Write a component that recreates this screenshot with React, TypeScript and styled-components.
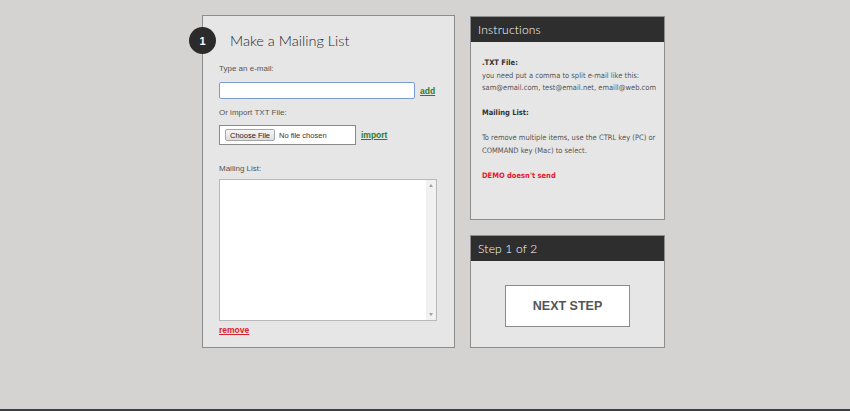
import React from "react";
import styled, { createGlobalStyle } from "styled-components";

const GlobalStyle = createGlobalStyle`
  html, body {
    margin: 0;
    padding: 0;
    background: #d4d3d1;
  }
  * {
    box-sizing: border-box;
  }
`;

const Page = styled.div`
  height: 100vh;
  display: flex;
  flex-direction: column;
  font-family: "Liberation Sans", Arial, sans-serif;
`;

const Main = styled.main`
  flex: 1;
  display: flex;
  align-items: flex-start;
  gap: 15px;
  padding: 15px 0 0 202px;
`;

const Footer = styled.footer`
  height: 2px;
  background: #3b3d40;
`;

const Panel = styled.section<{ $width: number; $height: number }>`
  position: relative;
  width: ${({ $width }) => $width}px;
  height: ${({ $height }) => $height}px;
  background: #e6e6e6;
  border: 1px solid #8c8c8c;
`;

const FormPanel = styled(Panel)`
  padding: 0 0 0 16px;
`;

const Badge = styled.div`
  position: absolute;
  left: -14px;
  top: 11px;
  width: 27px;
  height: 27px;
  border-radius: 50%;
  background: #2b2b2b;
  color: #fff;
  font: bold 11px "Liberation Sans", Arial, sans-serif;
  display: flex;
  align-items: center;
  justify-content: center;
`;

const Title = styled.h1`
  margin: 16px 0 0 11px;
  font: 300 14.5px Lato, "DejaVu Sans", sans-serif;
  color: #262626;
`;

const Label = styled.div<{ $top: number }>`
  margin-top: ${({ $top }) => $top}px;
  font-size: 8px;
  color: #555;
  line-height: 10px;
`;

const Row = styled.div<{ $top: number }>`
  margin-top: ${({ $top }) => $top}px;
  display: flex;
  align-items: center;
  gap: 5px;
`;

const EmailInput = styled.input`
  width: 196px;
  height: 17px;
  border: 1px solid #7b9bd4;
  border-radius: 2px;
  background: #fff;
  outline: none;
`;

const ActionLink = styled.a<{ $color: string }>`
  font-size: 8.5px;
  font-weight: bold;
  color: ${({ $color }) => $color};
  text-decoration: underline;
  cursor: pointer;
`;

const FileBox = styled.div`
  width: 137px;
  height: 20px;
  background: #fff;
  border: 1px solid #8a8a8a;
  display: flex;
  align-items: center;
  gap: 4px;
  padding-left: 5px;
  font-size: 7.5px;
  color: #333;
`;

const ChooseButton = styled.span`
  height: 12px;
  padding: 0 4px;
  border: 1px solid #a5a5a5;
  border-radius: 2px;
  background: linear-gradient(#f6f6f6, #dedede);
  display: flex;
  align-items: center;
  color: #222;
`;

const ListBox = styled.div`
  margin-top: 5px;
  width: 218px;
  height: 142px;
  border: 1px solid #b9b9b9;
  background: #fff;
  display: flex;
  justify-content: flex-end;
`;

const Scrollbar = styled.div`
  width: 10px;
  background: #f1f1f1;
  display: flex;
  flex-direction: column;
  justify-content: space-between;
  align-items: center;
  padding: 4px 0;
`;

const Arrow = styled.span<{ $down?: boolean }>`
  width: 0;
  height: 0;
  border-left: 2px solid transparent;
  border-right: 2px solid transparent;
  ${({ $down }) =>
    $down ? "border-top: 3px solid #a3a3a3;" : "border-bottom: 3px solid #a3a3a3;"}
`;

const RemoveRow = styled.div`
  margin-top: 1px;
  line-height: 12px;
`;

const Column = styled.div`
  display: flex;
  flex-direction: column;
  gap: 15px;
  padding-top: 1px;
`;

const PanelHeader = styled.header`
  height: 25px;
  background: #2e2e2e;
  color: #fff;
  padding-left: 7px;
  display: flex;
  align-items: center;
  font: 300 12px Lato, "DejaVu Sans", sans-serif;
  letter-spacing: 0.2px;
`;

const InstructionBody = styled.div`
  padding: 15px 0 0 11px;
  font-family: "DejaVu Sans Condensed", "Liberation Sans Narrow", "Liberation Sans", sans-serif;
  font-stretch: condensed;
  font-size: 7.5px;
  line-height: 12.5px;
  color: #555;
  white-space: nowrap;
`;

const Para = styled.p<{ $tone?: "head" | "alert" }>`
  margin: 0 0 12.5px;
  font-weight: ${({ $tone }) => ($tone ? "bold" : "normal")};
  color: ${({ $tone }) =>
    $tone === "alert" ? "#e8152a" : $tone === "head" ? "#333" : "#555"};
`;

const Strong = styled.strong`
  display: block;
  color: #333;
`;

const StepBody = styled.div`
  display: flex;
  justify-content: center;
  padding: 24px 0 0 0;
`;

const NextButton = styled.button`
  width: 125px;
  height: 42px;
  background: #fff;
  border: 1px solid #8c8c8c;
  color: #555;
  font: bold 12.5px "Liberation Sans", Arial, sans-serif;
  cursor: pointer;
`;

export default function App() {
  return (
    <>
      <GlobalStyle />
      <Page>
        <Main>
          <FormPanel $width={253} $height={333}>
            <Badge>1</Badge>
            <Title>Make a Mailing List</Title>
            <Label $top={15}>Type an e-mail:</Label>
            <Row $top={8}>
              <EmailInput />
              <ActionLink $color="#2a7d2a">add</ActionLink>
            </Row>
            <Label $top={9}>Or import TXT File:</Label>
            <Row $top={7}>
              <FileBox>
                <ChooseButton>Choose File</ChooseButton>
                No file chosen
              </FileBox>
              <ActionLink $color="#2a7d2a">import</ActionLink>
            </Row>
            <Label $top={19}>Mailing List:</Label>
            <ListBox>
              <Scrollbar>
                <Arrow />
                <Arrow $down />
              </Scrollbar>
            </ListBox>
            <RemoveRow>
              <ActionLink $color="#d9232d">remove</ActionLink>
            </RemoveRow>
          </FormPanel>
          <Column>
            <Panel $width={195} $height={204}>
              <PanelHeader>Instructions</PanelHeader>
              <InstructionBody>
                <Para>
                  <Strong>.TXT File:</Strong>
                  you need put a comma to split e-mail like this:
                  <br />
                  sam@email.com, test@email.net, emaill@web.com
                </Para>
                <Para $tone="head">Mailing List:</Para>
                <Para>
                  To remove multiple items, use the CTRL key (PC) or
                  <br />
                  COMMAND key (Mac) to select.
                </Para>
                <Para $tone="alert">DEMO doesn't send</Para>
              </InstructionBody>
            </Panel>
            <Panel $width={195} $height={113}>
              <PanelHeader>Step 1 of 2</PanelHeader>
              <StepBody>
                <NextButton>NEXT STEP</NextButton>
              </StepBody>
            </Panel>
          </Column>
        </Main>
        <Footer />
      </Page>
    </>
  );
}
